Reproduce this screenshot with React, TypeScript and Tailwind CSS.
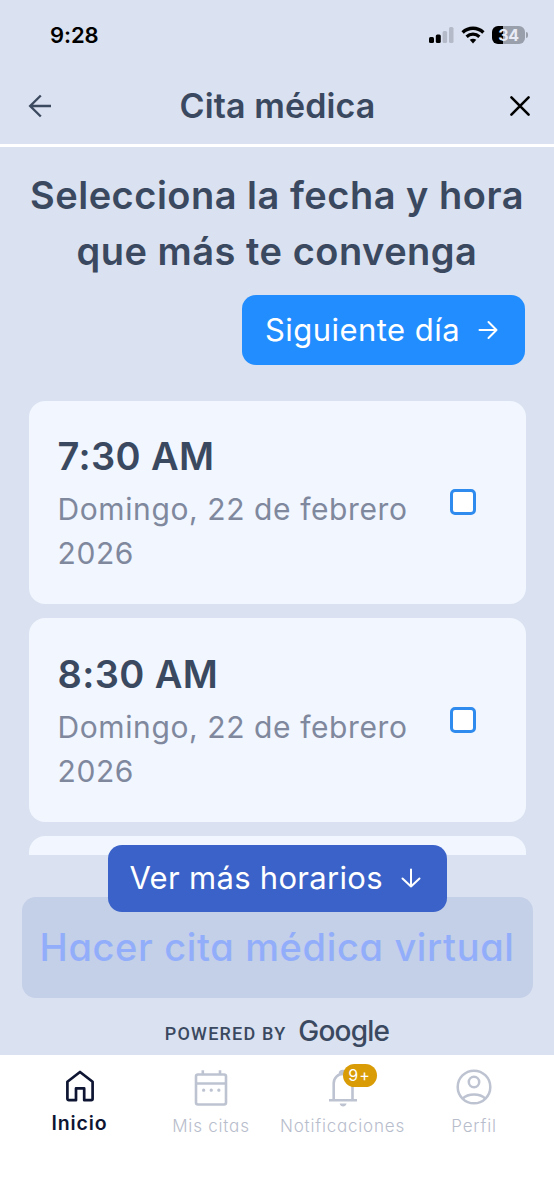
import type { ReactNode } from 'react';

interface Slot {
  time: string;
  date: string;
}

const slots: Slot[] = [
  { time: '7:30 AM', date: 'Domingo, 22 de febrero 2026' },
  { time: '8:30 AM', date: 'Domingo, 22 de febrero 2026' },
];

function StatusBar() {
  return (
    <div className="flex h-[70px] items-center justify-between pl-[50px] pr-[26px] text-black">
      <span className="text-[22px] font-semibold leading-none tracking-[-0.1px]">9:28</span>
      <div className="flex items-center">
        <svg width="26" height="18" viewBox="0 0 26 18" className="mr-[7px]">
          <rect x="1" y="11" width="5" height="6" rx="1.5" fill="#000" />
          <rect x="7.8" y="8.5" width="5" height="8.5" rx="1.5" fill="#000" />
          <rect x="14.6" y="5" width="4.5" height="12" rx="1.5" fill="#b5bac8" />
          <rect x="21" y="1" width="4.5" height="16" rx="1.5" fill="#b5bac8" />
        </svg>
        <svg width="24" height="18" viewBox="0 0 24 18" className="mr-[7px]" fill="none" stroke="#000">
          <path d="M1.6 6.5C7.6.9 16.4.9 22.4 6.5" strokeWidth="3.4" />
          <path d="M5.6 10.7c3.7-3.4 9.1-3.4 12.8 0" strokeWidth="3.2" />
          <path d="M8.7 13.8c2-1.5 4.6-1.5 6.6 0L12 17.4Z" fill="#000" stroke="none" />
        </svg>
        <div className="flex h-[18px] w-[33px] items-center justify-center rounded-[6px] bg-[linear-gradient(90deg,#000_34%,#9a9fac_34%)] text-[16px] font-bold leading-none tracking-[-0.3px] text-[#e8ebf5]">
          34
        </div>
        <span className="ml-px h-[6px] w-[2px] rounded-r-full bg-[#9a9fac]" />
      </div>
    </div>
  );
}

function Header() {
  return (
    <header className="flex h-[77px] items-center justify-between border-b-[3px] border-white pb-[3px] pl-[28px] pr-[23px]">
      <svg width="24" height="24" viewBox="0 0 24 24" fill="none" stroke="#3c4a60" strokeWidth="2.4">
        <path d="M23 12H2M12.8 1.5 2.2 12l10.6 10.5" />
      </svg>
      <h1 className="mr-[6px] whitespace-nowrap text-[34px] font-semibold leading-none tracking-[0.1px]">Cita médica</h1>
      <svg width="22" height="22" viewBox="0 0 22 22" fill="none" stroke="#000" strokeWidth="2.6" strokeLinecap="round">
        <path d="m2.4 2.4 17.2 17.2M19.6 2.4 2.4 19.6" />
      </svg>
    </header>
  );
}

function SlotCard({ slot }: { slot: Slot }) {
  return (
    <div className="flex h-[203.5px] shrink-0 justify-between rounded-[16px] bg-[#f1f6ff] pl-[29px] pr-[50px] pt-[32.5px]">
      <div className="w-[370px]">
        <h3 className="text-[38px] font-semibold leading-[46px] tracking-[0.4px]">{slot.time}</h3>
        <p className="mt-[8px] text-[30px] font-normal leading-[44px] tracking-[0.6px] text-[#7f889d]">{slot.date}</p>
      </div>
      <span className="mt-[56px] h-[26px] w-[26px] shrink-0 rounded-[5px] border-[3px] border-[#2f8bee] bg-white" />
    </div>
  );
}

interface NavItemProps {
  label: string;
  width: string;
  active?: boolean;
  children: ReactNode;
}

function NavItem({ label, width, active, children }: NavItemProps) {
  return (
    <div className={`flex flex-col items-center ${width}`}>
      <div className="relative flex h-[43px] items-end justify-center">{children}</div>
      <span
        className={
          active
            ? 'mt-[4px] whitespace-nowrap text-[19.5px] font-semibold leading-[24px] tracking-[0.9px] text-[#0e1533]'
            : "mt-[9px] whitespace-nowrap text-[17px] font-light leading-[20px] tracking-[0.8px] text-[#b8bdcc] [font-feature-settings:'cv11']"
        }
      >
        {label}
      </span>
    </div>
  );
}

function BottomNav() {
  return (
    <nav className="flex h-[145.5px] bg-white pl-[14px] pt-[9px]">
      <NavItem label="Inicio" width="w-[131px]" active>
        <svg width="28" height="32" viewBox="0 0 28 32" className="mb-[5px]" fill="none" stroke="#0e1533" strokeWidth="2.7" strokeLinejoin="round">
          <path d="M1.4 11.8 14 2l12.6 9.8v17a1.4 1.4 0 0 1-1.4 1.4h-7V18.4H10v11.8H2.8a1.4 1.4 0 0 1-1.4-1.4Z" />
        </svg>
      </NavItem>
      <NavItem label="Mis citas" width="w-[132px]">
        <svg width="34" height="38" viewBox="0 0 34 38" fill="none" stroke="#bdc3d1" strokeWidth="2.6">
          <rect x="2" y="5.5" width="30" height="30" rx="2" />
          <path d="M2 14.5h30M8.8 1.2v4M26 1.2v4" />
          <path d="M9.6 21.2h.1M17.2 21.2h.1M24.8 21.2h.1" strokeWidth="3.2" strokeLinecap="round" />
        </svg>
      </NavItem>
      <NavItem label="Notificaciones" width="w-[131px]">
        <svg width="28" height="38" viewBox="0 0 28 38" fill="none" stroke="#bdc3d1" strokeWidth="2.6">
          <path d="M4.7 31V14.3a9.4 9.4 0 0 1 18.8 0V31M0 31.2h28" />
          <path d="M11 4.8c0-3.6 6-3.6 6 0" fill="#bdc3d1" />
          <path d="M10.6 34.4h7c-.8 4-6.2 4-7 0Z" fill="#bdc3d1" stroke="none" />
        </svg>
        <span className="absolute left-[14px] top-0 flex h-[23px] w-[34px] items-center justify-center rounded-full bg-[#d99b06] pb-px text-[16px] leading-none tracking-[1px] text-white">
          9+
        </span>
      </NavItem>
      <NavItem label="Perfil" width="w-[132px]">
        <svg width="36" height="36" viewBox="0 0 36 36" className="mb-[2px]" fill="none" stroke="#bdc3d1" strokeWidth="2.5">
          <circle cx="18" cy="18" r="16.3" />
          <circle cx="18" cy="13" r="5.2" />
          <path d="M6.8 29.5c5.3-5.4 17.1-5.4 22.4 0" />
        </svg>
      </NavItem>
    </nav>
  );
}

export default function App() {
  return (
    <div className="flex h-[1200px] w-[554px] flex-col overflow-hidden bg-[#dae1f0] font-['Inter',sans-serif] text-[#3a4960]">
      <StatusBar />
      <Header />
      <main className="flex h-[907.5px] flex-col">
        <h2 className="mt-[21px] whitespace-nowrap text-center text-[38px] font-semibold leading-[55.5px] tracking-[0.5px]">
          Selecciona la fecha y hora
          <br />
          que más te convenga
        </h2>
        <button className="ml-auto mr-[29px] mt-[16px] flex h-[70px] w-[283px] items-center justify-between rounded-[14px] bg-[#228dff] pl-[23px] pr-[27px] text-[31px] leading-none tracking-[0.45px] text-white">
          <span className="whitespace-nowrap pb-[2px]">Siguiente día</span>
          <svg width="20" height="20" viewBox="0 0 20 20" fill="none" stroke="currentColor" strokeWidth="2" strokeLinecap="round" strokeLinejoin="round">
            <path d="M1.5 10h17M10.5 2l8 8-8 8" />
          </svg>
        </button>
        <div className="mx-[28.5px] mt-[35.5px] flex h-[454px] shrink-0 flex-col gap-[14px] overflow-hidden">
          {slots.map((slot) => (
            <SlotCard key={slot.time} slot={slot} />
          ))}
          {/* top edge of the next card */}
          <div className="grow rounded-t-[16px] bg-[#f1f6ff]" />
        </div>
        <div className="relative mx-[21.5px] mt-[42.5px] shrink-0">
          <button className="flex h-[100.5px] w-full items-center justify-center rounded-[14px] bg-[#c4cfe8] text-[38px] font-medium text-[#92aefa]">
            <span className="whitespace-nowrap leading-none tracking-[0.65px] [font-feature-settings:'cv11']">Hacer cita médica virtual</span>
          </button>
          <button className="absolute left-[86px] top-[-52.5px] flex h-[67px] w-[339px] items-center justify-between rounded-[14px] bg-[#3a62c8] pl-[22px] pr-[26px] text-[31px] leading-none tracking-[0.3px] text-white">
            <span className="whitespace-nowrap pb-[2px]">Ver más horarios</span>
            <svg width="20" height="20" viewBox="0 0 20 20" fill="none" stroke="currentColor" strokeWidth="2" strokeLinecap="round" strokeLinejoin="round">
              <path d="M10 1.5v17M1.5 10.5l8.5 8 8.5-8" />
            </svg>
          </button>
        </div>
        <div className="mt-[17px] flex items-baseline justify-center gap-[12px] whitespace-nowrap">
          <span className="-translate-y-px font-['Roboto',sans-serif] text-[18px] font-medium tracking-[1.2px]">POWERED BY</span>
          <span className="text-[28px] font-medium leading-[32px] tracking-[-0.8px] [font-feature-settings:'cv11']">Google</span>
        </div>
      </main>
      <BottomNav />
    </div>
  );
}
